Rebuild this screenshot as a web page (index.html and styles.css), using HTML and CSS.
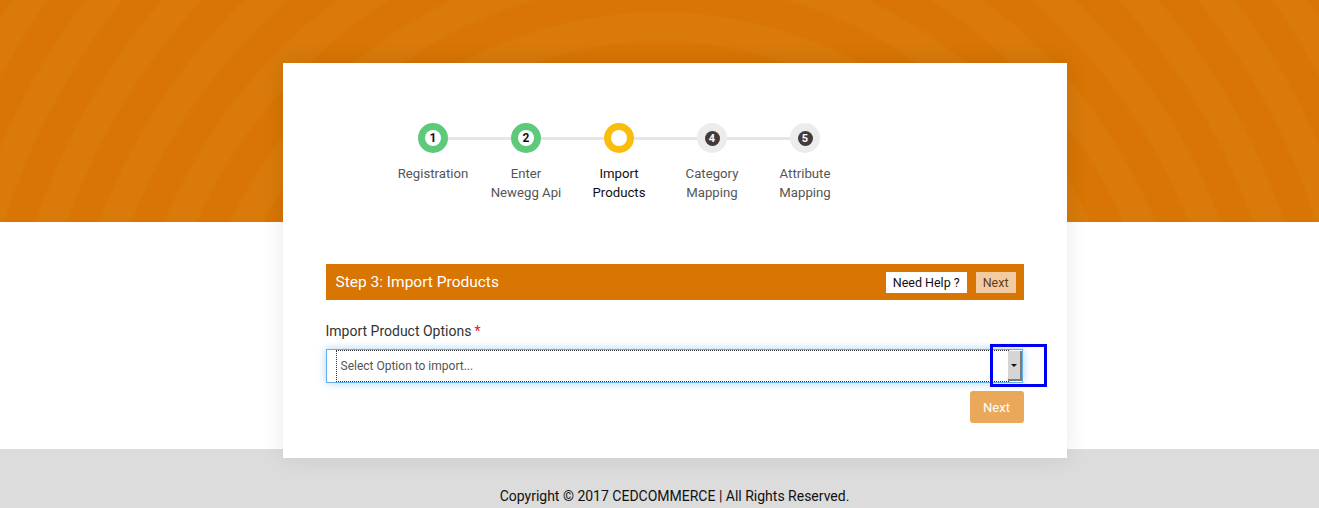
FILE: index.html
```html
<!DOCTYPE html>
<html>
<head>
<meta charset="utf-8">
<title>Import Products</title>
<link rel="stylesheet" href="styles.css">
</head>
<body>
<div class="page">
  <div class="card">
    <div class="stepper">
      <div class="step done">
        <div class="dot"><span class="num">1</span></div>
        <div class="label">Registration</div>
      </div>
      <div class="step done">
        <div class="dot"><span class="num">2</span></div>
        <div class="label">Enter<br>Newegg Api</div>
      </div>
      <div class="step active">
        <div class="dot"><span class="num"></span></div>
        <div class="label">Import<br>Products</div>
      </div>
      <div class="step todo">
        <div class="dot"><span class="num">4</span></div>
        <div class="label">Category<br>Mapping</div>
      </div>
      <div class="step todo">
        <div class="dot"><span class="num">5</span></div>
        <div class="label">Attribute<br>Mapping</div>
      </div>
    </div>

    <div class="bar">
      <div class="bar-title">Step 3: Import Products</div>
      <div class="bar-actions">
        <span class="btn-help">Need Help ?</span>
        <span class="btn-next-sm">Next</span>
      </div>
    </div>

    <div class="field-label">Import Product Options<span class="req">*</span></div>
    <div class="select">
      <div class="select-value">Select Option to import...</div>
      <div class="select-btn"><span class="arrow"></span></div>
      <div class="highlight"></div>
    </div>
    <div class="actions">
      <span class="btn-next">Next</span>
    </div>
  </div>
  <div class="footer">Copyright © 2017 CEDCOMMERCE | All Rights Reserved.</div>
</div>
</body>
</html>
```

FILE: styles.css
```css
html, body {
  margin: 0;
  padding: 0;
}
body {
  font-family: Roboto, "Liberation Sans", Arial, sans-serif;
  width: 1319px;
  height: 508px;
  overflow: hidden;
}
.page {
  height: 508px;
  box-sizing: border-box;
  padding-left: 30px;
  display: flex;
  flex-direction: column;
  align-items: center;
  background:
    repeating-radial-gradient(circle at 660px 430px, #d87504 0 26px, #d97a0b 30px 56px, #d87504 60px) top left / 100% 222px no-repeat,
    linear-gradient(to bottom, #ffffff 0 449px, #dcdcdc 449px 100%);
}
.card {
  margin-top: 63px;
  width: 784px;
  height: 395px;
  box-sizing: border-box;
  padding: 60px 43px 0 43px;
  background: #fff;
  box-shadow: 0 0 22px rgba(0, 0, 0, 0.09);
  position: relative;
}
.stepper {
  display: flex;
  margin-left: 61px;
}
.step {
  width: 93px;
  display: flex;
  flex-direction: column;
  align-items: center;
  position: relative;
}
.step + .step::before {
  content: "";
  position: absolute;
  top: 14px;
  left: -46px;
  width: 93px;
  height: 3px;
  background: #e6e6e6;
  z-index: 0;
}
.dot {
  width: 30px;
  height: 30px;
  border-radius: 50%;
  display: flex;
  align-items: center;
  justify-content: center;
  position: relative;
  z-index: 1;
}
.num {
  width: 16px;
  height: 16px;
  border-radius: 50%;
  display: flex;
  align-items: center;
  justify-content: center;
  font-size: 12px;
  font-weight: 700;
  line-height: 1;
}
.done .dot { background: #5ec97a; }
.done .num { background: #fff; color: #111; }
.active .dot { background: #fbbd0c; }
.active .num { background: #fff; }
.todo .dot { background: #ececec; }
.todo .num { background: #433b37; color: #fff; width: 15px; height: 15px; font-size: 11px; }
.label {
  margin-top: 11px;
  font-size: 13.2px;
  line-height: 19px;
  color: #555;
  text-align: center;
  white-space: nowrap;
}
.active .label { color: #111; }

.bar {
  margin-top: 62px;
  height: 36px;
  background: #d87503;
  display: flex;
  align-items: center;
  justify-content: space-between;
  padding: 0 8px 0 10px;
}
.bar-title {
  color: #fff;
  font-size: 15.5px;
}
.bar-actions {
  display: flex;
  gap: 9px;
}
.btn-help {
  background: #fff;
  color: #111;
  font-size: 12.5px;
  line-height: 21px;
  padding: 0 7px;
}
.btn-next-sm {
  background: #f2cba1;
  color: #5e3d1c;
  font-size: 12.5px;
  line-height: 21px;
  padding: 0 7px;
}
.field-label {
  margin-top: 21px;
  font-size: 14px;
  line-height: 20px;
  color: #333;
}
.req {
  color: #e8141a;
  margin-left: 3px;
}
.select {
  margin-top: 8px;
  height: 34px;
  width: 697px;
  box-sizing: border-box;
  border: 1px solid #66afe9;
  box-shadow: 0 0 8px rgba(102, 175, 233, 0.55);
  display: flex;
  position: relative;
  background: #fff;
}
.select-value {
  flex: 1;
  margin: 1px 0 1px 10px;
  outline: 1px dotted #333;
  outline-offset: 0;
  font-size: 12px;
  color: #555;
  display: flex;
  align-items: center;
  padding-left: 4px;
}
.select-btn {
  width: 12px;
  margin: 1px 0;
  background: #d5d5d5;
  border-right: 2px solid #7b7b7b;
  border-bottom: 2px solid #7b7b7b;
  display: flex;
  align-items: center;
  justify-content: center;
}
.arrow {
  width: 0;
  height: 0;
  border-left: 3px solid transparent;
  border-right: 3px solid transparent;
  border-top: 3px solid #111;
}
.highlight {
  position: absolute;
  left: 663px;
  top: -6px;
  width: 57px;
  height: 43px;
  box-sizing: border-box;
  border: 3px solid #0000f0;
}
.actions {
  display: flex;
  justify-content: flex-end;
  margin-top: 8px;
}
.btn-next {
  width: 54px;
  height: 32px;
  border-radius: 3px;
  background: #e9a85a;
  color: #fff;
  font-size: 13px;
  display: flex;
  align-items: center;
  justify-content: center;
}
.footer {
  margin-top: 29px;
  font-size: 14px;
  line-height: 18px;
  color: #111;
}
```
